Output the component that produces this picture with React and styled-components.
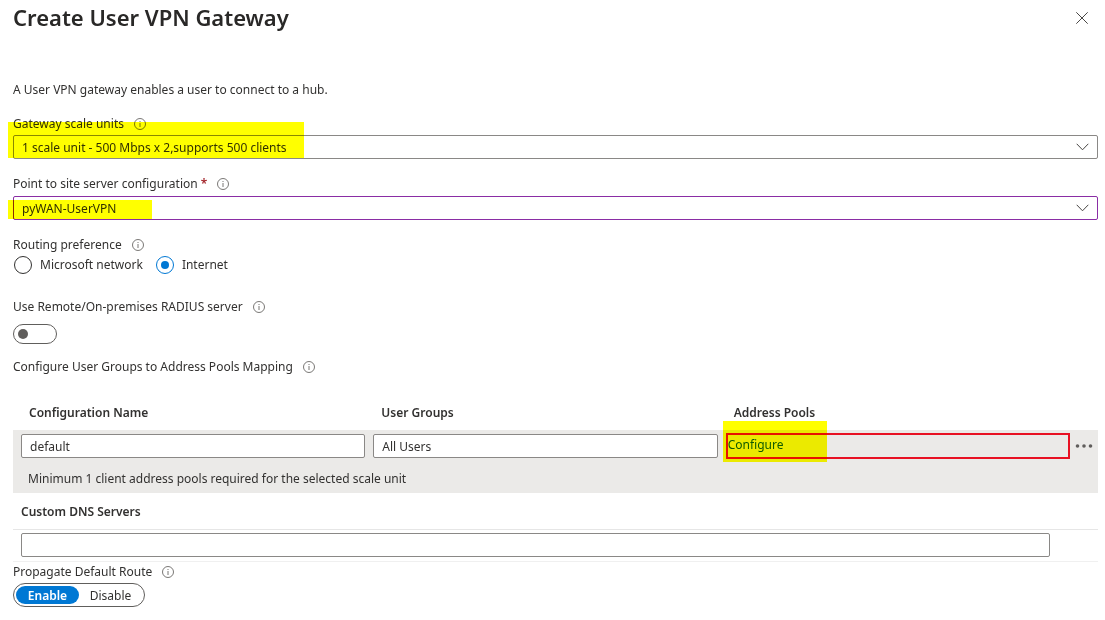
import React, { useState } from "react";
import styled, { createGlobalStyle } from "styled-components";

const GlobalStyle = createGlobalStyle`
  *, *::before, *::after { box-sizing: border-box; }
  body {
    margin: 0;
    background: #fff;
    color: #323130;
    font: 400 12px/18px "Noto Sans", "Open Sans", sans-serif;
  }
  button, input, select { font: inherit; color: inherit; }
`;

const Blade = styled.main`
  padding: 0 7px 12px 13px;
`;

const Header = styled.header`
  display: flex;
  align-items: center;
  justify-content: space-between;
  height: 36px;
  margin-bottom: 45px;
`;

const Title = styled.h1`
  margin: 0;
  padding-bottom: 2px;
  font-size: 22px;
  line-height: 32px;
  font-weight: 600;
  color: #292827;
`;

const IconButton = styled.button`
  display: flex;
  align-items: center;
  justify-content: center;
  width: ${(p) => p.$width}px;
  height: 24px;
  padding: 0;
  border: 0;
  background: none;
  cursor: pointer;
`;

const Intro = styled.p`
  margin: 0;
`;

const Field = styled.div`
  position: relative;
  display: flex;
  flex-direction: column;
  align-items: stretch;
  gap: ${(p) => p.$gap ?? 2}px;
  margin-top: ${(p) => p.$top}px;
`;

const LabelRow = styled.div`
  display: flex;
  align-items: center;
  gap: 10px;
  height: 18px;
`;

const Required = styled.span`
  color: #a4262c;
  font-weight: 600;
`;

const Highlight = styled.span`
  position: absolute;
  top: ${(p) => p.$top}px;
  left: -5px;
  width: ${(p) => p.$width}px;
  height: ${(p) => p.$height}px;
  background: #ff0;
  mix-blend-mode: multiply;
  pointer-events: none;
`;

const SelectBox = styled.div`
  display: grid;
  align-items: center;
  > * { grid-area: 1 / 1; }
  > svg {
    justify-self: end;
    margin-right: 8px;
    pointer-events: none;
  }
`;

const Select = styled.select`
  appearance: none;
  width: 100%;
  height: 24px;
  padding: 1px 32px 0 8px;
  border: 1px solid ${(p) => (p.$edited ? "#8a2da5" : "#8a8886")};
  border-radius: 2px;
  background: #fff;
  outline: none;
`;

const TextInput = styled.input`
  display: block;
  width: 100%;
  height: 24px;
  padding: 0 8px;
  border: 1px solid #8a8886;
  border-radius: 2px;
  background: #fff;
  outline: none;
`;

const RadioGroup = styled.div`
  display: flex;
  gap: 13px;
  padding-left: 1px;
`;

const RadioOption = styled.label`
  display: flex;
  align-items: center;
  gap: 8px;
`;

const Radio = styled.input`
  appearance: none;
  display: grid;
  place-items: center;
  width: 18px;
  height: 18px;
  margin: 0;
  border: 1px solid #323130;
  border-radius: 50%;
  &:checked { border-color: #0078d4; }
  &:checked::after {
    content: "";
    width: 8px;
    height: 8px;
    border-radius: 50%;
    background: #0078d4;
  }
`;

const Switch = styled.input`
  appearance: none;
  display: flex;
  align-items: center;
  width: 44px;
  height: 20px;
  margin: 0;
  padding: 0 4px;
  border: 1px solid #605e5c;
  border-radius: 10px;
  &::after {
    content: "";
    width: 10px;
    height: 10px;
    border-radius: 50%;
    background: #605e5c;
  }
  &:checked { justify-content: flex-end; }
`;

const Table = styled.table`
  width: 100%;
  margin-top: ${(p) => p.$top ?? 0}px;
  table-layout: fixed;
  border-collapse: separate;
  border-spacing: 0;
`;

const HeadCell = styled.th`
  height: ${(p) => p.$height}px;
  padding: 1px 0 0 ${(p) => p.$indent}px;
  border-bottom: ${(p) => (p.$ruled ? "1px solid #e6e6e6" : "0")};
  text-align: left;
  font-weight: 600;
`;

const ActionColumn = styled.col`
  width: 28px;
`;

const MappingBody = styled.tbody`
  background: #ebeae8;
`;

const MappingCell = styled.td`
  height: 32px;
  padding: 0 0 0 ${(p) => (p.$flush ? 0 : 8)}px;
  vertical-align: middle;
`;

const NoteCell = styled.td`
  height: 31px;
  padding: 2px 15px 0 15px;
`;

const PoolBox = styled.div`
  position: relative;
  height: 26px;
  border: 2px solid #e81123;
`;

const PoolLink = styled.a`
  display: block;
  line-height: 20px;
  color: #0f5a78;
  text-decoration: none;
`;

const DnsCell = styled.td`
  padding: 3px 48px 4px 8px;
  border-bottom: 1px solid #f0f0f0;
`;

const Pill = styled.div`
  display: flex;
  align-self: flex-start;
  width: 132px;
  height: 24px;
  padding: 2px;
  border: 1px solid #605e5c;
  border-radius: 12px;
`;

const PillButton = styled.button`
  flex: 1;
  padding: 1px 0 0;
  border: 0;
  border-radius: 9px;
  line-height: 17px;
  font-weight: ${(p) => (p.$active ? 600 : 400)};
  color: ${(p) => (p.$active ? "#fff" : "#323130")};
  background: ${(p) => (p.$active ? "#0078d4" : "transparent")};
`;

const InfoIcon = () => (
  <svg width="12" height="12" viewBox="0 0 12 12" fill="none" aria-hidden="true">
    <circle cx="6" cy="6" r="5.5" stroke="#6b6967" strokeWidth="0.9" />
    <path d="M6 5v4M6 3v1" stroke="#797775" />
  </svg>
);

const CloseIcon = () => (
  <svg width="12" height="12" viewBox="0 0 12 12" fill="none" aria-hidden="true">
    <path d="M0.3 0.3l11.4 11.4M11.7 0.3L0.3 11.7" stroke="#484644" />
  </svg>
);

const ChevronIcon = () => (
  <svg width="14" height="8" viewBox="0 0 14 8" fill="none" aria-hidden="true">
    <path d="M0.7 0.8L6.5 6.8l5.8-6" stroke="#484644" />
  </svg>
);

const MoreIcon = () => (
  <svg width="18" height="4" viewBox="0 0 18 4" fill="#605e5c" aria-hidden="true">
    <circle cx="2.5" cy="2" r="1.8" />
    <circle cx="9" cy="2" r="1.8" />
    <circle cx="15.5" cy="2" r="1.8" />
  </svg>
);

function Label({ htmlFor, id, required, children }) {
  return (
    <LabelRow>
      <label htmlFor={htmlFor} id={id}>
        {children}
        {required && <Required> *</Required>}
      </label>
      <InfoIcon />
    </LabelRow>
  );
}

export default function App() {
  const [routing, setRouting] = useState("internet");
  const [radius, setRadius] = useState(false);
  const [propagate, setPropagate] = useState(true);

  return (
    <>
      <GlobalStyle />
      <Blade>
        <Header>
          <Title>Create User VPN Gateway</Title>
          <IconButton $width={32} aria-label="Close">
            <CloseIcon />
          </IconButton>
        </Header>

        <Intro>A User VPN gateway enables a user to connect to a hub.</Intro>

        <Field $top={16}>
          <Label htmlFor="scale">Gateway scale units</Label>
          <SelectBox>
            <Select id="scale">
              <option>1 scale unit - 500 Mbps x 2,supports 500 clients</option>
            </Select>
            <ChevronIcon />
          </SelectBox>
          <Highlight $top={7} $width={296} $height={36} />
        </Field>

        <Field $top={16} $gap={3}>
          <Label htmlFor="server" required>
            Point to site server configuration
          </Label>
          <SelectBox>
            <Select id="server" $edited>
              <option>pyWAN-UserVPN</option>
            </Select>
            <ChevronIcon />
          </SelectBox>
          <Highlight $top={25} $width={144} $height={19} />
        </Field>

        <Field $top={16}>
          <Label id="routing">Routing preference</Label>
          <RadioGroup role="radiogroup" aria-labelledby="routing">
            <RadioOption>
              <Radio
                type="radio"
                name="routing"
                checked={routing === "microsoft"}
                onChange={() => setRouting("microsoft")}
              />
              Microsoft network
            </RadioOption>
            <RadioOption>
              <Radio
                type="radio"
                name="routing"
                checked={routing === "internet"}
                onChange={() => setRouting("internet")}
              />
              Internet
            </RadioOption>
          </RadioGroup>
        </Field>

        <Field $top={24} $gap={8}>
          <Label htmlFor="radius">Use Remote/On-premises RADIUS server</Label>
          <Switch
            id="radius"
            type="checkbox"
            role="switch"
            checked={radius}
            onChange={(e) => setRadius(e.target.checked)}
          />
        </Field>

        <Field $top={14}>
          <Label id="mapping">Configure User Groups to Address Pools Mapping</Label>
        </Field>

        <Table $top={19} aria-labelledby="mapping">
          <colgroup>
            <col />
            <col />
            <col />
            <ActionColumn />
          </colgroup>
          <thead>
            <tr>
              <HeadCell $height={35} $indent={16}>Configuration Name</HeadCell>
              <HeadCell $height={35} $indent={16}>User Groups</HeadCell>
              <HeadCell $height={35} $indent={16}>Address Pools</HeadCell>
              <HeadCell $height={35} $indent={0} />
            </tr>
          </thead>
          <MappingBody>
            <tr>
              <MappingCell>
                <TextInput aria-label="Configuration Name" defaultValue="default" />
              </MappingCell>
              <MappingCell>
                <TextInput aria-label="User Groups" defaultValue="All Users" />
              </MappingCell>
              <MappingCell>
                <PoolBox>
                  <PoolLink href="#configure">Configure</PoolLink>
                  <Highlight $top={-14} $width={104} $height={41} />
                </PoolBox>
              </MappingCell>
              <MappingCell $flush>
                <IconButton $width={28} aria-label="More options">
                  <MoreIcon />
                </IconButton>
              </MappingCell>
            </tr>
            <tr>
              <NoteCell colSpan={4}>
                Minimum 1 client address pools required for the selected scale unit
              </NoteCell>
            </tr>
          </MappingBody>
        </Table>

        <Table>
          <thead>
            <tr>
              <HeadCell $height={37} $indent={8} $ruled>Custom DNS Servers</HeadCell>
            </tr>
          </thead>
          <tbody>
            <tr>
              <DnsCell>
                <TextInput aria-label="Custom DNS Servers" />
              </DnsCell>
            </tr>
          </tbody>
        </Table>

        <Field $top={1}>
          <Label id="propagate">Propagate Default Route</Label>
          <Pill role="group" aria-labelledby="propagate">
            <PillButton $active={propagate} aria-pressed={propagate} onClick={() => setPropagate(true)}>
              Enable
            </PillButton>
            <PillButton $active={!propagate} aria-pressed={!propagate} onClick={() => setPropagate(false)}>
              Disable
            </PillButton>
          </Pill>
        </Field>
      </Blade>
    </>
  );
}
